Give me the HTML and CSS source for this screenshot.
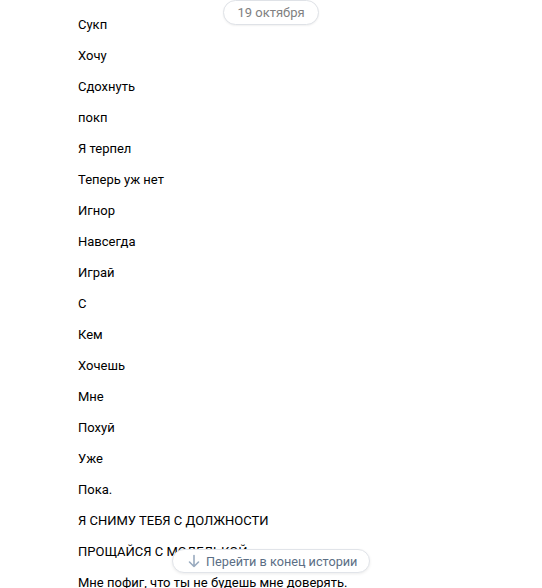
FILE: index.html
```html
<!DOCTYPE html>
<html lang="ru">
<head>
    <meta charset="UTF-8">
    <title>История</title>
    <link rel="stylesheet" href="styles.css">
</head>
<body>
    <div class="history">
        <div class="date-pill">19 октября</div>
        <div class="messages">
            <div class="msg">Сукп</div>
            <div class="msg">Хочу</div>
            <div class="msg">Сдохнуть</div>
            <div class="msg">покп</div>
            <div class="msg">Я терпел</div>
            <div class="msg">Теперь уж нет</div>
            <div class="msg">Игнор</div>
            <div class="msg">Навсегда</div>
            <div class="msg">Играй</div>
            <div class="msg">С</div>
            <div class="msg">Кем</div>
            <div class="msg">Хочешь</div>
            <div class="msg">Мне</div>
            <div class="msg">Похуй</div>
            <div class="msg">Уже</div>
            <div class="msg">Пока.</div>
            <div class="msg">Я СНИМУ ТЕБЯ С ДОЛЖНОСТИ</div>
            <div class="msg">ПРОЩАЙСЯ С МОДЕЛЬКОЙ</div>
            <div class="msg">Мне пофиг, что ты не будешь мне доверять.</div>
        </div>
        <button class="to-end">
            <svg width="12" height="14" viewBox="0 0 12 14" fill="none" stroke="#99aabf" stroke-width="1.6" stroke-linecap="round" stroke-linejoin="round">
                <path d="M6 1.5v11M1.5 8l4.5 4.5L10.5 8"/>
            </svg>
            Перейти в конец истории
        </button>
    </div>
</body>
</html>
```

FILE: styles.css
```css
html, body {
    margin: 0;
    height: 100%;
    overflow: hidden;
}
body {
    font-family: Roboto, 'Liberation Sans', Arial, sans-serif;
    font-size: 13px;
    color: #000000;
    background: #ffffff;
}
.history {
    position: relative;
    height: 100%;
}
.messages {
    padding: 9px 0 0 78px;
}
.msg {
    line-height: 31px;
    white-space: nowrap;
}
.date-pill {
    position: absolute;
    top: 0;
    left: 223px;
    width: 94px;
    height: 23px;
    line-height: 23px;
    text-align: center;
    color: #818181;
    background: #ffffff;
    border: 1px solid #dfe2e7;
    border-radius: 13px;
    box-shadow: 0 1px 2px rgba(0, 0, 0, 0.06);
}
.to-end {
    position: absolute;
    top: 549px;
    left: 172px;
    width: 198px;
    height: 24px;
    padding: 0 0 0 15px;
    display: flex;
    align-items: center;
    gap: 6px;
    font-family: inherit;
    font-size: 12.7px;
    color: #5b6e85;
    background: #ffffff;
    border: 1px solid #e1e4e9;
    border-radius: 13px;
    box-shadow: 0 1px 3px rgba(0, 0, 0, 0.08);
    cursor: pointer;
}
```
